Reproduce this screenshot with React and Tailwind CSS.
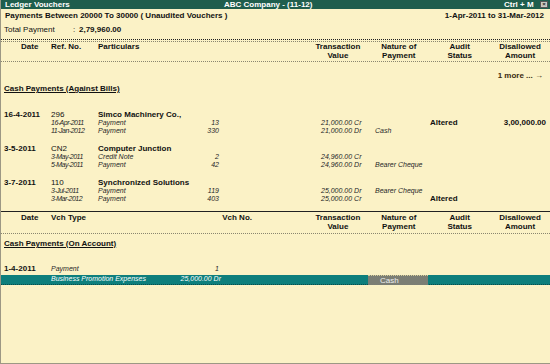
import React from "react";

const GRID = "grid grid-cols-[47px_47px_90px_32px_101px_54px_55px_50px_66px] pl-[3px]";

const groups = [
  {
    date: "16-4-2011",
    ref: "296",
    party: "Simco Machinery Co.,",
    lines: [
      { d: "16-Apr-2011", t: "Payment", n: "13", v: "21,000.00 Cr", audit: "Altered", amt: "3,00,000.00" },
      { d: "11-Jan-2012", t: "Payment", n: "330", v: "21,000.00 Dr", nat: "Cash" },
    ],
  },
  {
    date: "3-5-2011",
    ref: "CN2",
    party: "Computer Junction",
    lines: [
      { d: "3-May-2011", t: "Credit Note", n: "2", v: "24,960.00 Cr" },
      { d: "5-May-2011", t: "Payment", n: "42", v: "24,960.00 Dr", nat: "Bearer Cheque" },
    ],
  },
  {
    date: "3-7-2011",
    ref: "110",
    party: "Synchronized Solutions",
    lines: [
      { d: "3-Jul-2011", t: "Payment", n: "119", v: "25,000.00 Dr", nat: "Bearer Cheque" },
      { d: "3-Mar-2012", t: "Payment", n: "403", v: "25,000.00 Cr", audit: "Altered" },
    ],
  },
];

function ColumnHeads({ first }) {
  return (
    <div className="flex font-bold text-[8px] leading-[9px] text-[#111]">
      <div className="w-[307px] flex">
        <div className="w-[50px] pl-[20px]">{first[0]}</div>
        <div className="w-[47px]">{first[1]}</div>
        <div className="w-[121px]">{first[2]}</div>
        <div className="w-[33px] text-right">{first[3]}</div>
      </div>
      <div className="w-[61px] text-center">Transaction<br />Value</div>
      <div className="w-[61px] text-center">Nature of<br />Payment</div>
      <div className="w-[61px] text-center">Audit<br />Status</div>
      <div className="w-[60px] text-center">Disallowed<br />Amount</div>
    </div>
  );
}

function Group({ g }) {
  return (
    <div className="mb-[8px]">
      <div className={`${GRID} h-[10px] items-center text-[8px] text-[#111]`}>
        <span className="font-bold">{g.date}</span>
        <span>{g.ref}</span>
        <span className="col-span-3 font-bold">{g.party}</span>
      </div>
      {g.lines.map((l) => (
        <div key={l.d} className={`${GRID} h-[8px] items-center text-[7px] leading-[8px] italic text-[#262626]`}>
          <span />
          <span className="tracking-[-0.5px]">{l.d}</span>
          <span>{l.t}</span>
          <span className="text-right pr-[1px]">{l.n}</span>
          <span />
          <span>{l.v}</span>
          <span>{l.nat}</span>
          <span className="not-italic font-bold text-[8px] text-[#111]">{l.audit}</span>
          <span className="not-italic font-bold text-[8px] text-right text-[#111]">{l.amt}</span>
        </div>
      ))}
    </div>
  );
}

export default function App() {
  return (
    <div className="w-[550px] h-[364px] overflow-hidden bg-[#fbf2c6] font-['Liberation_Sans',Arial,sans-serif] text-[#111] flex flex-col border-l border-b border-[#9c9884]">
      {/* title bar */}
      <div className="h-[9px] bg-[#1f5e4d] text-white font-bold text-[8px] leading-[9px] flex items-center">
        <div className="w-[223px] pl-[4px]">Ledger Vouchers</div>
        <div className="w-[280px]">ABC Company - (11-12)</div>
        <div className="w-[36px]">Ctrl + M</div>
        <div className="w-[8px] h-[7px] bg-[#c9c9c0] border border-[#555] text-[#222] text-[6px] leading-[5px] text-center">×</div>
      </div>

      <div className="h-[14px] flex items-center justify-between px-[4px] pr-[6px] text-[8px] font-bold">
        <span>Payments Between 20000 To 30000 ( Unaudited Vouchers )</span>
        <span>1-Apr-2011 to 31-Mar-2012</span>
      </div>
      <div className="h-[13px] flex items-center pl-[3px] text-[8px]">
        <span className="w-[69px]">Total Payment</span>
        <span className="w-[6px]">:</span>
        <span className="font-bold">2,79,960.00</span>
      </div>

      <div className="mt-[3px] h-[3px] border-t border-[#222] border-b border-dotted border-b-[#8a8670]" />
      <ColumnHeads first={["Date", "Ref. No.", "Particulars", ""]} />
      <div className="mt-[1px] border-t border-dotted border-[#8a8670]" />

      <div className="mt-[9px] h-[10px] flex items-center justify-end pr-[7px] text-[8px] font-bold text-[#3a2a10]">
        1 more ... →
      </div>
      <div className="mt-[3px] h-[10px] flex items-center pl-[3px] text-[8px] font-bold">
        <span className="underline">Cash Payments (Against Bills)</span>
      </div>

      <div className="mt-[15px]">
        {groups.map((g) => (
          <Group key={g.date} g={g} />
        ))}
      </div>

      <div className="border-t border-[#222]" />
      <div className="mt-[1px]">
        <ColumnHeads first={["Date", "Vch Type", "", "Vch No."]} />
      </div>
      <div className="mt-[2px] border-t border-dotted border-[#8a8670]" />

      <div className="mt-[5px] h-[10px] flex items-center pl-[3px] text-[8px] font-bold">
        <span className="underline">Cash Payments (On Account)</span>
      </div>

      <div className={`${GRID} mt-[14px] h-[10px] items-center text-[8px]`}>
        <span className="font-bold">1-4-2011</span>
        <span className="col-span-2 italic text-[7px] text-[#262626]">Payment</span>
        <span className="text-right pr-[1px] italic text-[7px] text-[#262626]">1</span>
      </div>

      <div className="mt-[2px] h-[10px] bg-[#0e7f7c] border-b border-dotted border-b-[#084c4a] flex items-center text-white italic text-[7px]">
        <div className="w-[50px]" />
        <div className="w-[100px]">Business Promotion Expenses</div>
        <div className="w-[70px] text-right">25,000.00 Dr</div>
        <div className="w-[147px]" />
        <div className="w-[60px] h-[10px] bg-[#7b7e74] border-t border-dotted border-t-[#d8cf9a] pl-[12px] not-italic text-[8px] text-[#eee] leading-[9px]">
          Cash
        </div>
      </div>
      <div className="flex-1" />
    </div>
  );
}
